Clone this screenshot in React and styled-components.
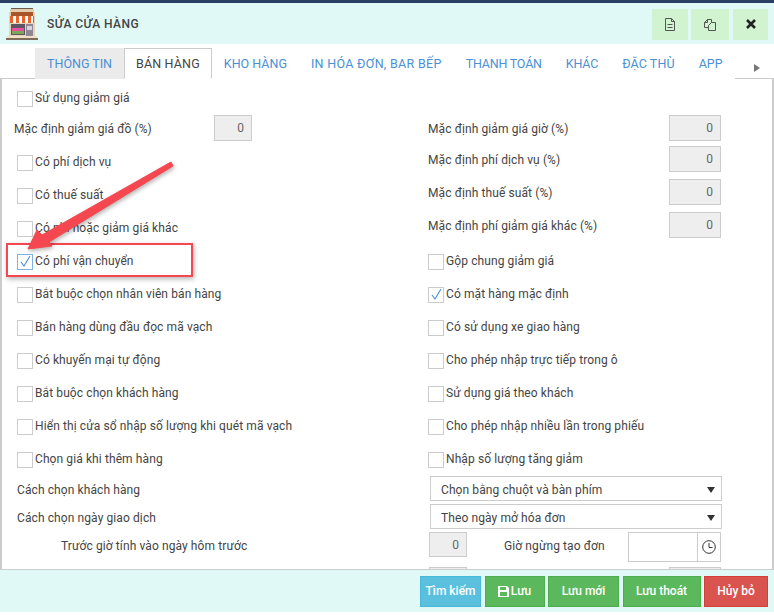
import React from 'react'
import styled, { createGlobalStyle } from 'styled-components'

const GlobalStyle = createGlobalStyle`
  html, body {
    margin: 0;
    padding: 0;
    background: #fff;
  }
  body {
    font-family: Roboto, "Liberation Sans", sans-serif;
    font-size: 12px;
    color: #444;
  }
`

const Page = styled.div`
  position: relative;
  width: 774px;
  height: 615px;
  overflow: hidden;
  background: #fff;
  border-top: 3px solid #2a3f66;
  box-sizing: border-box;
`

const Header = styled.div`
  display: flex;
  align-items: center;
  height: 41px;
  padding: 1px 6px 0;
  background: #e0f9f6;
  box-sizing: border-box;
`

const Title = styled.div`
  flex: 1;
  margin-left: 9px;
  font-size: 12px;
  font-weight: 500;
  letter-spacing: 0.4px;
  color: #444;
`

const HeadButton = styled.div`
  display: flex;
  align-items: center;
  justify-content: center;
  width: ${props => props.w}px;
  height: 31px;
  margin-left: ${props => props.gap || 3}px;
  background: #d2f3cf;
`

const Tabs = styled.div`
  display: flex;
  align-items: flex-end;
  height: 35px;
  padding-left: 35px;
  border-bottom: 1px solid #ccc;
  box-sizing: border-box;
`

const Tab = styled.div`
  display: flex;
  align-items: center;
  height: 31px;
  padding: 0 11px;
  margin-bottom: -1px;
  font-size: 12.5px;
  letter-spacing: ${props => props.spacing || 0}px;
  white-space: nowrap;
  color: ${props => (props.active ? '#444' : '#4a90d6')};
  background: ${props => (props.muted ? '#ebebeb' : '#fff')};
  border: 1px solid ${props => (props.active ? '#ccc' : 'transparent')};
  border-bottom-color: ${props => (props.active ? '#fff' : 'transparent')};
  box-sizing: border-box;
`

const ScrollCaret = styled.span`
  width: 0;
  height: 0;
  margin-left: 19px;
  margin-bottom: 6px;
  border-top: 4px solid transparent;
  border-bottom: 4px solid transparent;
  border-left: 6px solid #777;
`

const Body = styled.div`
  height: 491px;
  padding-top: 3px;
  border-left: 2px solid #ccc;
  border-right: 2px solid #ccc;
  border-bottom: 1px solid #ccc;
  box-sizing: border-box;
  overflow: hidden;
`

const Rows = styled.div`
  display: grid;
  grid-template-columns: 426px 1fr;
  grid-template-rows: 33px 31px repeat(10, 33px) 28px 28px 35px 26px;
`

const Cell = styled.div`
  display: flex;
  align-items: ${props => (props.top ? 'flex-start' : 'center')};
  padding-left: ${props => props.pad ?? 15}px;
  padding-right: ${props => props.right ?? 0}px;
`

const Box = styled.span`
  display: flex;
  align-items: center;
  justify-content: center;
  width: 16px;
  height: 16px;
  margin-right: 2px;
  border: 1px solid ${props => (props.focus ? '#7db2e8' : '#ccc')};
  box-sizing: border-box;
`

const Label = styled.span`
  letter-spacing: 0.1px;
  white-space: nowrap;
`

const CheckLabel = styled(Label)`
  margin-bottom: 2px;
`

const FieldLabel = styled(Label)`
  line-height: 28px;
`

const Spacer = styled.span`
  flex: 1;
`

const NumberBox = styled.div`
  display: flex;
  align-items: center;
  justify-content: flex-end;
  flex: none;
  width: ${props => props.w}px;
  height: ${props => props.h || 26}px;
  padding-right: 7px;
  color: #666;
  background: #eee;
  border: 1px solid #ccc;
  box-sizing: border-box;
`

const Select = styled.div`
  display: flex;
  align-items: center;
  justify-content: space-between;
  width: 292px;
  height: 25px;
  margin-left: 2px;
  padding: 2px 6px 0 10px;
  border: 1px solid #ccc;
  box-sizing: border-box;
`

const Caret = styled.span`
  width: 0;
  height: 0;
  border-left: 4px solid transparent;
  border-right: 4px solid transparent;
  border-top: 6px solid #333;
`

const Footer = styled.div`
  display: flex;
  justify-content: flex-end;
  align-items: center;
  gap: 3.5px;
  height: 42px;
  padding-right: 6px;
  background: #e0f9f6;
  box-sizing: border-box;
`

const Button = styled.div`
  display: flex;
  align-items: center;
  justify-content: center;
  gap: 2px;
  width: ${props => props.w}px;
  height: 31px;
  color: #fff;
  font-weight: 500;
  background: ${props => props.bg};
  border: 1px solid ${props => props.line};
  box-sizing: border-box;
`

const TimeRow = styled.div`
  display: flex;
  align-items: flex-start;
  grid-column: 1 / 3;
  padding-left: 59px;
`

const TimeLabel = styled(FieldLabel)`
  width: 368px;
`

const StopLabel = styled(FieldLabel)`
  width: 124px;
  margin-left: 37px;
`

const TimeInput = styled.div`
  display: flex;
  justify-content: flex-end;
  width: 93px;
  height: 30px;
  border: 1px solid #ccc;
  box-sizing: border-box;
`

const ClockCell = styled.div`
  display: flex;
  align-items: center;
  justify-content: center;
  width: 23px;
  border-left: 1px solid #ccc;
  box-sizing: border-box;
`

const Highlight = styled.div`
  position: absolute;
  left: 6px;
  top: 240px;
  width: 187px;
  height: 34px;
  border: 2px solid #f5474f;
  box-shadow: 1px 2px 5px rgba(0, 0, 0, 0.3);
  box-sizing: border-box;
`

const Arrow = styled.svg`
  position: absolute;
  left: 20px;
  top: 155px;
  filter: drop-shadow(1px 2px 2px rgba(0, 0, 0, 0.3));
`

const StoreIcon = () => (
  <svg width="32" height="32" viewBox="0 0 32 32">
    <rect x="5" y="0" width="22" height="1" fill="#6f5a48" />
    <rect x="4" y="1" width="24" height="3" fill="#e2cdb0" />
    <rect x="3" y="4" width="26" height="24" fill="#e6d3b8" />
    <rect x="5" y="4" width="22" height="4" fill="#a9552a" />
    <rect x="4" y="8" width="24" height="7" fill="#e8622a" />
    <path d="M7 8h3v7H7zM13 8h3v7h-3zM19 8h3v7h-3zM25 8h2v7h-2z" fill="#fff" />
    <rect x="5" y="16" width="14" height="11" fill="#5f5663" />
    <rect x="6" y="20" width="12" height="3" fill="#e84fa0" />
    <rect x="6" y="23" width="12" height="3" fill="#7aa65a" />
    <rect x="20" y="16" width="7" height="12" fill="#8f8793" />
    <rect x="21" y="18" width="5" height="4" fill="#d9d4dc" />
    <rect x="1" y="28" width="30" height="2" fill="#efe0c8" />
    <rect x="0" y="30" width="32" height="2" fill="#7d6a58" />
  </svg>
)

const FileIcon = () => (
  <svg width="12" height="13" viewBox="0 0 12 13" fill="none" stroke="#555">
    <path d="M1.500.5h6l3 3v9h-9zM7.500.5v3h3M3.500 6.500h5M3.500 9.500h5" />
  </svg>
)

const CopyIcon = () => (
  <svg width="14" height="13" viewBox="0 0 14 13" fill="none" stroke="#555">
    <path d="M5.500 9.500h-4v-5l3-3h4v3M4.500 1.500v3h-3M5.500 7.500l3-3h4v8h-7z" />
  </svg>
)

const CloseIcon = () => (
  <svg width="10" height="10" viewBox="0 0 10 10" stroke="#222" strokeWidth="2.6">
    <path d="M1 1l8 8M9 1l-8 8" />
  </svg>
)

const CheckIcon = () => (
  <svg width="13" height="13" viewBox="0 0 13 13" fill="none" stroke="#4a90d6" strokeWidth="1.1">
    <path d="M2 7l3 4 6-10" />
  </svg>
)

const ClockIcon = () => (
  <svg width="14" height="14" viewBox="0 0 14 14" fill="none" stroke="#333">
    <circle cx="7" cy="7" r="6.300" />
    <path d="M7 3v4.500h3.500" />
  </svg>
)

const SaveIcon = () => (
  <svg width="11" height="11" viewBox="0 0 11 11" fill="#fff">
    <path d="M0 0h9l2 2v9H0zM2 1v3h6V1zM2 6v4h7V6z" fillRule="evenodd" />
  </svg>
)

const Check = ({ label, checked, focus }) => (
  <>
    <Box focus={focus}>{checked && <CheckIcon />}</Box>
    <CheckLabel>{label}</CheckLabel>
  </>
)

const tabs = [
  { name: 'THÔNG TIN' },
  { name: 'BÁN HÀNG', spacing: 0.15 },
  { name: 'KHO HÀNG' },
  { name: 'IN HÓA ĐƠN, BAR BẾP', spacing: 0.3 },
  { name: 'THANH TOÁN', spacing: -0.2 },
  { name: 'KHÁC', spacing: -0.2 },
  { name: 'ĐẶC THÙ', spacing: 0.1 },
  { name: 'APP' },
]

const rows = [
  { left: { check: 'Sử dụng giảm giá' } },
  { left: { text: 'Mặc định giảm giá đồ (%)', value: '0' }, right: { text: 'Mặc định giảm giá giờ (%)', value: '0' } },
  { left: { check: 'Có phí dịch vụ' }, right: { text: 'Mặc định phí dịch vụ (%)', value: '0' } },
  { left: { check: 'Có thuế suất' }, right: { text: 'Mặc định thuế suất (%)', value: '0' } },
  { left: { check: 'Có phí hoặc giảm giá khác' }, right: { text: 'Mặc định phí giảm giá khác (%)', value: '0' } },
  { left: { check: 'Có phí vận chuyển', checked: true, focus: true }, right: { check: 'Gộp chung giảm giá' } },
  { left: { check: 'Bắt buộc chọn nhân viên bán hàng' }, right: { check: 'Có mặt hàng mặc định', checked: true } },
  { left: { check: 'Bán hàng dùng đầu đọc mã vạch' }, right: { check: 'Có sử dụng xe giao hàng' } },
  { left: { check: 'Có khuyến mại tự động' }, right: { check: 'Cho phép nhập trực tiếp trong ô' } },
  { left: { check: 'Bắt buộc chọn khách hàng' }, right: { check: 'Sử dụng giá theo khách' } },
  { left: { check: 'Hiển thị cửa sổ nhập số lượng khi quét mã vạch' }, right: { check: 'Cho phép nhập nhiều lần trong phiếu' } },
  { left: { check: 'Chọn giá khi thêm hàng' }, right: { check: 'Nhập số lượng tăng giảm' } },
]

const renderCell = (cell, isRight) => {
  if (!cell) return <Cell />
  if (cell.check) {
    return (
      <Cell pad={isRight ? 0 : 15}>
        <Check label={cell.check} checked={cell.checked} focus={cell.focus} />
      </Cell>
    )
  }
  return (
    <Cell top pad={isRight ? 0 : 12} right={isRight ? 51 : 176}>
      <FieldLabel>{cell.text}</FieldLabel>
      <Spacer />
      <NumberBox w={isRight ? 52 : 38}>{cell.value}</NumberBox>
    </Cell>
  )
}

const App = () => (
  <Page>
    <GlobalStyle />
    <Header>
      <StoreIcon />
      <Title>SỬA CỬA HÀNG</Title>
      <HeadButton w={36}><FileIcon /></HeadButton>
      <HeadButton w={38}><CopyIcon /></HeadButton>
      <HeadButton w={35} gap={4}><CloseIcon /></HeadButton>
    </Header>
    <Tabs>
      {tabs.map((tab, index) => (
        <Tab key={tab.name} active={index === 1} muted={index === 0} spacing={tab.spacing}>{tab.name}</Tab>
      ))}
      <ScrollCaret />
    </Tabs>
    <Body>
      <Rows>
        {rows.map((row, index) => (
          <React.Fragment key={index}>
            {renderCell(row.left, false)}
            {renderCell(row.right, true)}
          </React.Fragment>
        ))}
        <Cell top><FieldLabel>Cách chọn khách hàng</FieldLabel></Cell>
        <Cell top pad={0}>
          <Select><Label>Chọn bằng chuột và bàn phím</Label><Caret /></Select>
        </Cell>
        <Cell top><FieldLabel>Cách chọn ngày giao dịch</FieldLabel></Cell>
        <Cell top pad={0}>
          <Select><Label>Theo ngày mở hóa đơn</Label><Caret /></Select>
        </Cell>
        <TimeRow>
          <TimeLabel>Trước giờ tính vào ngày hôm trước</TimeLabel>
          <NumberBox w={38} h={25}>0</NumberBox>
          <StopLabel>Giờ ngừng tạo đơn</StopLabel>
          <TimeInput><ClockCell><ClockIcon /></ClockCell></TimeInput>
        </TimeRow>
        <Cell />
        <Cell top pad={1} right={51}>
          <NumberBox w={38} />
          <Spacer />
          <NumberBox w={52} />
        </Cell>
      </Rows>
    </Body>
    <Footer>
      <Button w={61} bg="#5bc0de" line="#46b8da">Tìm kiếm</Button>
      <Button w={60} bg="#5cb85c" line="#4cae4c"><SaveIcon />Lưu</Button>
      <Button w={71} bg="#5cb85c" line="#4cae4c">Lưu mới</Button>
      <Button w={78} bg="#5cb85c" line="#4cae4c">Lưu thoát</Button>
      <Button w={64} bg="#d9534f" line="#d43f3a">Hủy bỏ</Button>
    </Footer>
    <Highlight />
    <Arrow width="160" height="100" viewBox="0 0 160 100">
      <path d="M151 4L153 8L29 84L32 88L8 91L17 72L22 77Z" fill="#f5474f" stroke="#f5474f" strokeWidth="1" strokeLinejoin="round" />
    </Arrow>
  </Page>
)

export default App
